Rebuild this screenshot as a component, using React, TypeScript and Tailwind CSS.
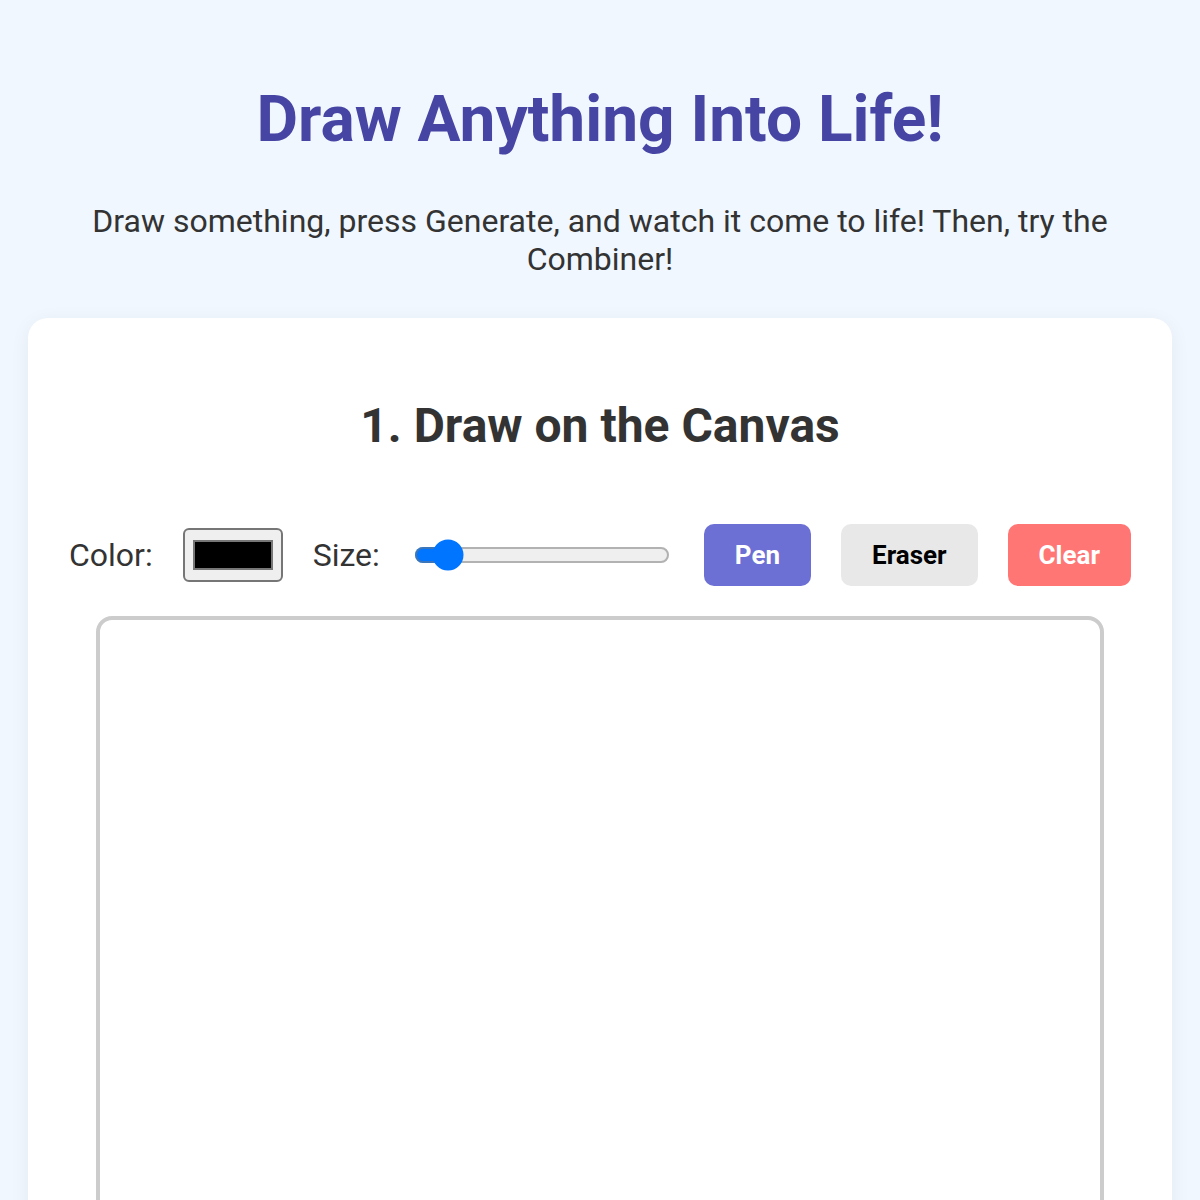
import React, { useState } from 'react';

function Toolbar() {
    const [color, setColor] = useState<string>('#000000');
    const [size, setSize] = useState<number>(5);
    const [tool, setTool] = useState<'pen' | 'eraser'>('pen');

    return (
        <div className="flex items-center justify-center gap-[30px]">
            <label className="text-[32px] leading-[38px] text-[#333]">Color:</label>
            <input
                type="color"
                value={color}
                onChange={(e) => setColor(e.target.value)}
                className="[zoom:2] w-[50px] h-[27px] border border-[#767676] bg-[#efefef] rounded-[3px] px-[2px] py-[1px] cursor-pointer"
            />
            <label className="text-[32px] leading-[38px] text-[#333]">Size:</label>
            <input
                type="range"
                min={1}
                max={50}
                value={size}
                onChange={(e) => setSize(Number(e.target.value))}
                className="[zoom:2] w-[128px] mx-[2px]"
            />
            <button
                onClick={() => setTool('pen')}
                className={`px-[31px] py-[16px] rounded-[10px] text-[26px] leading-[30px] font-bold ${tool === 'pen' ? 'bg-[#6c6fd3] text-white' : 'bg-[#e8e8e8] text-black'}`}
            >
                Pen
            </button>
            <button
                onClick={() => setTool('eraser')}
                className={`px-[31px] py-[16px] rounded-[10px] text-[26px] leading-[30px] font-bold ${tool === 'eraser' ? 'bg-[#6c6fd3] text-white' : 'bg-[#e8e8e8] text-black'}`}
            >
                Eraser
            </button>
            <button className="px-[31px] py-[16px] rounded-[10px] text-[26px] leading-[30px] font-bold bg-[#ff7675] text-white">
                Clear
            </button>
        </div>
    );
}

export default function App() {
    return (
        <div className="min-h-screen bg-[#f0f7ff] px-[28px] pt-[82px] text-[#333] font-['Roboto',sans-serif]">
            <h1 className="text-center text-[64px] leading-[75px] font-bold text-[#4745a4]">
                Draw Anything Into Life!
            </h1>
            <p className="mt-[45px] text-center text-[32px] leading-[38px] text-[#333]">
                Draw something, press Generate, and watch it come to life! Then, try the Combiner!
            </p>
            <div className="mt-[40px] bg-white rounded-[20px] shadow-[0_4px_20px_rgba(0,0,0,0.06)] pt-[80px] pb-[40px]">
                <h2 className="text-center text-[48px] leading-[56px] font-bold text-[#333]">
                    1. Draw on the Canvas
                </h2>
                <div className="mt-[70px]">
                    <Toolbar />
                </div>
                <div className="mt-[30px] flex justify-center">
                    <canvas
                        width={500}
                        height={500}
                        className="w-[1000px] h-[1000px] box-content bg-white border-4 border-[#ccc] rounded-[16px]"
                    />
                </div>
            </div>
        </div>
    );
}
